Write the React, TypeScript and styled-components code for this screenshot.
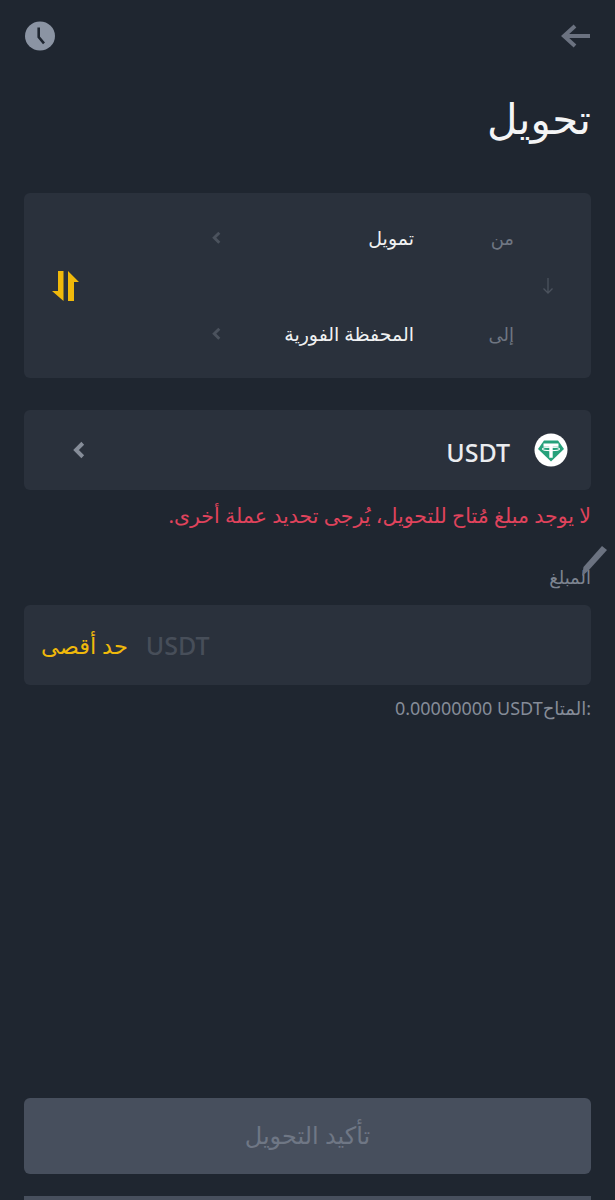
import styled, { createGlobalStyle } from "styled-components"

const GlobalStyle = createGlobalStyle`
  html, body {
    margin: 0;
    padding: 0;
    background: #1f2630;
  }
  * { box-sizing: border-box; }
`

const Page = styled.div`
  width: 615px;
  height: 1200px;
  overflow: hidden;
  background: #1f2630;
  padding: 0 24px;
  display: flex;
  flex-direction: column;
  font-family: "Noto Sans", "DejaVu Sans", sans-serif;
  color: #eaecef;
`

const TopBar = styled.div`
  height: 72px;
  display: flex;
  align-items: center;
  justify-content: space-between;
`

const Title = styled.h1`
  margin: 0;
  height: 121px;
  padding-top: 21px;
  font-size: 42px;
  line-height: 50px;
  font-weight: 400;
  color: #f4f5f6;
`

const Card = styled.div`
  background: #2a313c;
  border-radius: 6px;
`

const RouteCard = styled(Card)`
  height: 185px;
  padding: 21px 0;
  display: grid;
  grid-template-columns: 77px 100px 190px 16px 1fr;
  grid-template-rows: repeat(3, 48px);
  align-items: center;
`

const RouteLabel = styled.div<{ $row: number }>`
  grid-column: 2;
  grid-row: ${(p) => p.$row};
  font-size: 18px;
  line-height: 24px;
  color: #6f7682;
`

const RouteValue = styled.div<{ $row: number }>`
  grid-column: 3;
  grid-row: ${(p) => p.$row};
  font-size: 19px;
  line-height: 24px;
  color: #f0f1f2;
`

const RouteChevron = styled.div<{ $row: number }>`
  grid-column: 4;
  grid-row: ${(p) => p.$row};
  display: flex;
  justify-content: center;
  color: #4b525d;
`

const RouteArrow = styled.div`
  grid-column: 1;
  grid-row: 2;
  display: flex;
  justify-content: flex-start;
  padding-right: 37px;
  color: #4b525d;
`

const SwapButton = styled.div`
  grid-column: 5;
  grid-row: 1 / 4;
  display: flex;
  justify-content: flex-end;
  padding-left: 28px;
`

const CoinCard = styled(Card)`
  margin-top: 32px;
  height: 80px;
  padding: 0 23px 0 22px;
  display: flex;
  align-items: center;
  gap: 24px;
`

const CoinName = styled.div`
  font-size: 25px;
  padding-top: 3px;
  font-weight: 500;
  color: #eaecef;
  flex: 1;
`

const CoinChevron = styled.div`
  display: flex;
  color: #868d99;
  margin-left: 27px;
`

const ErrorText = styled.div`
  margin-top: 11px;
  font-size: 20.5px;
  line-height: 28px;
  color: #e0435c;
  white-space: nowrap;
`

const AmountLabel = styled.div`
  position: relative;
  margin-top: 23px;
  height: 53px;
  padding-top: 13px;
  font-size: 18px;
  line-height: 24px;
  color: #7d8490;
`

const Pencil = styled.svg`
  position: absolute;
  left: 558px;
  top: -7px;
`

const AmountCard = styled(Card)`
  height: 80px;
  padding-left: 17px;
  display: flex;
  align-items: center;
  justify-content: flex-end;
  gap: 18px;
`

const MaxLabel = styled.div`
  font-size: 22.5px;
  color: #f0b90b;
  white-space: nowrap;
`

const Placeholder = styled.div`
  font-size: 25px;
  font-weight: 500;
  color: #474e59;
`

const Available = styled.div`
  margin-top: 10px;
  font-size: 18px;
  line-height: 26px;
  color: #858c98;
`

const LatinAmount = styled.span`
  unicode-bidi: isolate;
  direction: ltr;
`

const Spacer = styled.div`
  flex: 1;
`

const ConfirmButton = styled.div`
  height: 76px;
  margin-bottom: 22px;
  padding-bottom: 3px;
  border-radius: 6px;
  background: #474f5d;
  color: #6f7785;
  font-size: 24px;
  display: flex;
  align-items: center;
  justify-content: center;
`

const NextBar = styled.div`
  height: 4px;
  flex: none;
  background: #474f5d;
`

const CoinIcon = () => (
  <svg width="34" height="34" viewBox="0 0 34 34">
    <circle cx="17" cy="17" r="16.500" fill="#fff" />
    <path d="M10 7.500h14l6 8.500-13 12.500L4 16z" fill="#26a17b" />
    <path d="M9.500 10.500h15v3.200h-5.800v11h-3.400v-11H9.500z" fill="#fff" />
    <ellipse cx="17" cy="16" rx="8.500" ry="1.700" fill="none" stroke="#fff" strokeWidth="1.100" />
  </svg>
)

const Chevron = ({ size }: { size: number }) => (
  <svg width={size} height={size * 1.5} viewBox="0 0 8 12" fill="none">
    <path d="M6.500 1.500 2 6l4.500 4.500" stroke="currentColor" strokeWidth="2.600" />
  </svg>
)

export default function App() {
  return (
    <Page dir="rtl">
      <GlobalStyle />
      <TopBar>
        <svg width="30" height="24" viewBox="0 0 30 24" fill="none">
          <path d="M29 12H4M14 2 3 12l11 10" stroke="#6b7280" strokeWidth="4" />
        </svg>
        <svg width="31" height="30" viewBox="0 0 31 30">
          <ellipse cx="16" cy="15" rx="15" ry="14.500" fill="#8b94a3" />
          <path d="M14.700 6.500v9.600l5.300 6.200" fill="none" stroke="#1f2630" strokeWidth="2.600" />
        </svg>
      </TopBar>
      <Title>تحويل</Title>

      <RouteCard>
        <RouteLabel $row={1}>من</RouteLabel>
        <RouteValue $row={1}>تمويل</RouteValue>
        <RouteChevron $row={1}>
          <Chevron size={9} />
        </RouteChevron>
        <SwapButton>
          <svg width="27" height="30" viewBox="0 0 27 30">
            <path d="M6 0h5.500v30L0 20h6zM16 0l11 11h-5v19h-6z" fill="#f0b90b" />
          </svg>
        </SwapButton>
        <RouteArrow>
          <svg width="12" height="16" viewBox="0 0 12 16" fill="none">
            <path d="M6 0v15M1.500 10.500 6 15l4.500-4.500" stroke="currentColor" strokeWidth="1.300" />
          </svg>
        </RouteArrow>
        <RouteLabel $row={3}>إلى</RouteLabel>
        <RouteValue $row={3}>المحفظة الفورية</RouteValue>
        <RouteChevron $row={3}>
          <Chevron size={9} />
        </RouteChevron>
      </RouteCard>

      <CoinCard>
        <CoinIcon />
        <CoinName>USDT</CoinName>
        <CoinChevron>
          <Chevron size={12} />
        </CoinChevron>
      </CoinCard>

      <ErrorText>لا يوجد مبلغ مُتاح للتحويل، يُرجى تحديد عملة أخرى.</ErrorText>

      <AmountLabel>
        المبلغ
        <Pencil width="26" height="34" viewBox="0 0 26 34">
          <path d="M20 1 25 5 6 26 0 31 1.500 22z" fill="#6b7280" />
        </Pencil>
      </AmountLabel>
      <AmountCard>
        <Placeholder>USDT</Placeholder>
        <MaxLabel>حد أقصى</MaxLabel>
      </AmountCard>
      <Available>
        :المتاح<LatinAmount>0.00000000 USDT</LatinAmount>
      </Available>

      <Spacer />
      <ConfirmButton>تأكيد التحويل</ConfirmButton>
      <NextBar />
    </Page>
  )
}
